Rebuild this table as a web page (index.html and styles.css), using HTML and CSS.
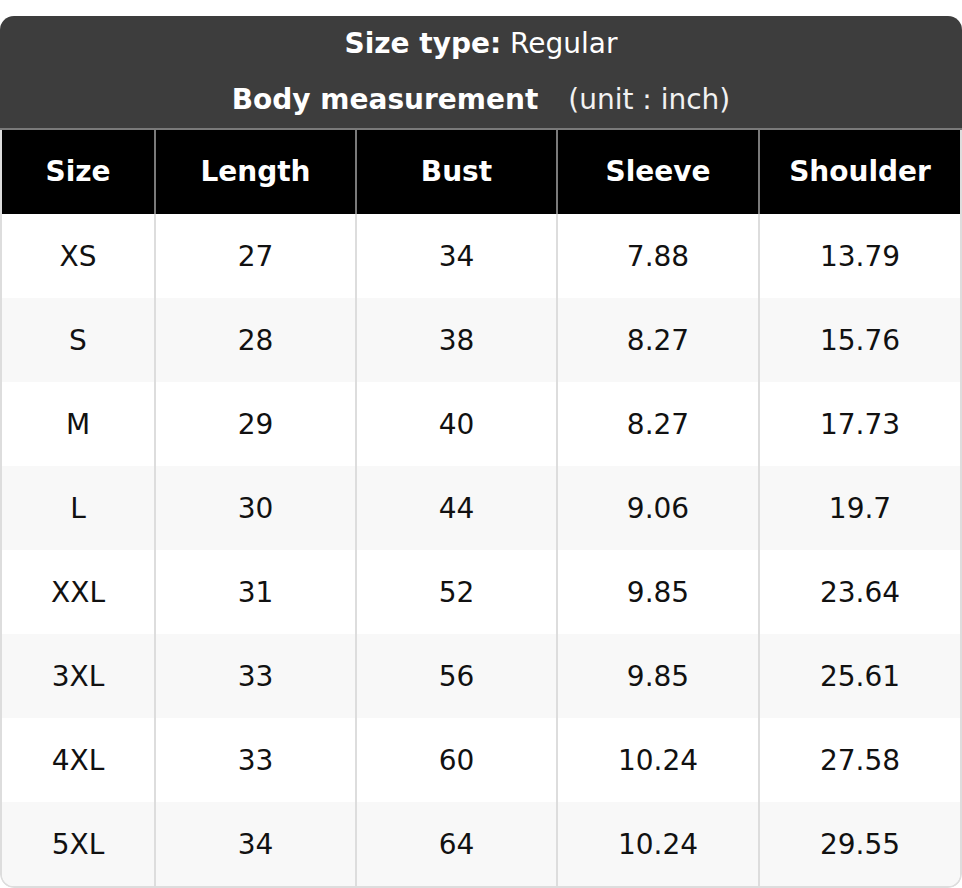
FILE: index.html
```html
<!DOCTYPE html>
<html>
<head>
<meta charset="utf-8">
<link rel="stylesheet" href="styles.css">
</head>
<body>
<div class="chart">
  <div class="title">
    <div class="line"><b>Size type:</b> Regular</div>
    <div class="line"><b>Body measurement</b><span class="unit">(unit : inch)</span></div>
  </div>
  <div class="table">
    <div class="row head">
      <div class="cell">Size</div><div class="cell">Length</div><div class="cell">Bust</div><div class="cell">Sleeve</div><div class="cell">Shoulder</div>
    </div>
    <div class="row">
      <div class="cell">XS</div><div class="cell">27</div><div class="cell">34</div><div class="cell">7.88</div><div class="cell">13.79</div>
    </div>
    <div class="row alt">
      <div class="cell">S</div><div class="cell">28</div><div class="cell">38</div><div class="cell">8.27</div><div class="cell">15.76</div>
    </div>
    <div class="row">
      <div class="cell">M</div><div class="cell">29</div><div class="cell">40</div><div class="cell">8.27</div><div class="cell">17.73</div>
    </div>
    <div class="row alt">
      <div class="cell">L</div><div class="cell">30</div><div class="cell">44</div><div class="cell">9.06</div><div class="cell">19.7</div>
    </div>
    <div class="row">
      <div class="cell">XXL</div><div class="cell">31</div><div class="cell">52</div><div class="cell">9.85</div><div class="cell">23.64</div>
    </div>
    <div class="row alt">
      <div class="cell">3XL</div><div class="cell">33</div><div class="cell">56</div><div class="cell">9.85</div><div class="cell">25.61</div>
    </div>
    <div class="row">
      <div class="cell">4XL</div><div class="cell">33</div><div class="cell">60</div><div class="cell">10.24</div><div class="cell">27.58</div>
    </div>
    <div class="row alt">
      <div class="cell">5XL</div><div class="cell">34</div><div class="cell">64</div><div class="cell">10.24</div><div class="cell">29.55</div>
    </div>
  </div>
</div>
</body>
</html>
```

FILE: styles.css
```css
html, body {
  margin: 0;
  padding: 0;
  background: #ffffff;
}
body {
  padding-top: 16px;
  font-family: "DejaVu Sans", "Liberation Sans", sans-serif;
  font-size: 28px;
  color: #111111;
}
.chart {
  width: 962px;
  border-radius: 14px;
  overflow: hidden;
}
.title {
  background: #3d3d3d;
  color: #ffffff;
  text-align: center;
  border-bottom: 2px solid #7a7a7a;
}
.line {
  height: 56px;
  line-height: 56px;
}
.line b {
  font-weight: bold;
}
.unit {
  margin-left: 30px;
  color: #f2f2f2;
}
.table {
  border: 2px solid #dddddd;
  border-top: 0;
  border-radius: 0 0 14px 14px;
  overflow: hidden;
}
.row {
  display: grid;
  grid-template-columns: 152px 201px 201px 202px 202px;
  height: 84px;
  background: #ffffff;
}
.row.alt {
  background: #f8f8f8;
}
.cell {
  display: flex;
  align-items: center;
  justify-content: center;
  border-left: 2px solid #dddddd;
}
.cell:first-child {
  border-left: 0;
}
.row.head {
  background: #000000;
  color: #ffffff;
  font-weight: bold;
}
.row.head .cell {
  border-left-color: #7a7a7a;
  padding-bottom: 1px;
}
.row.head .cell:first-child {
  border-left: 0;
}
```
